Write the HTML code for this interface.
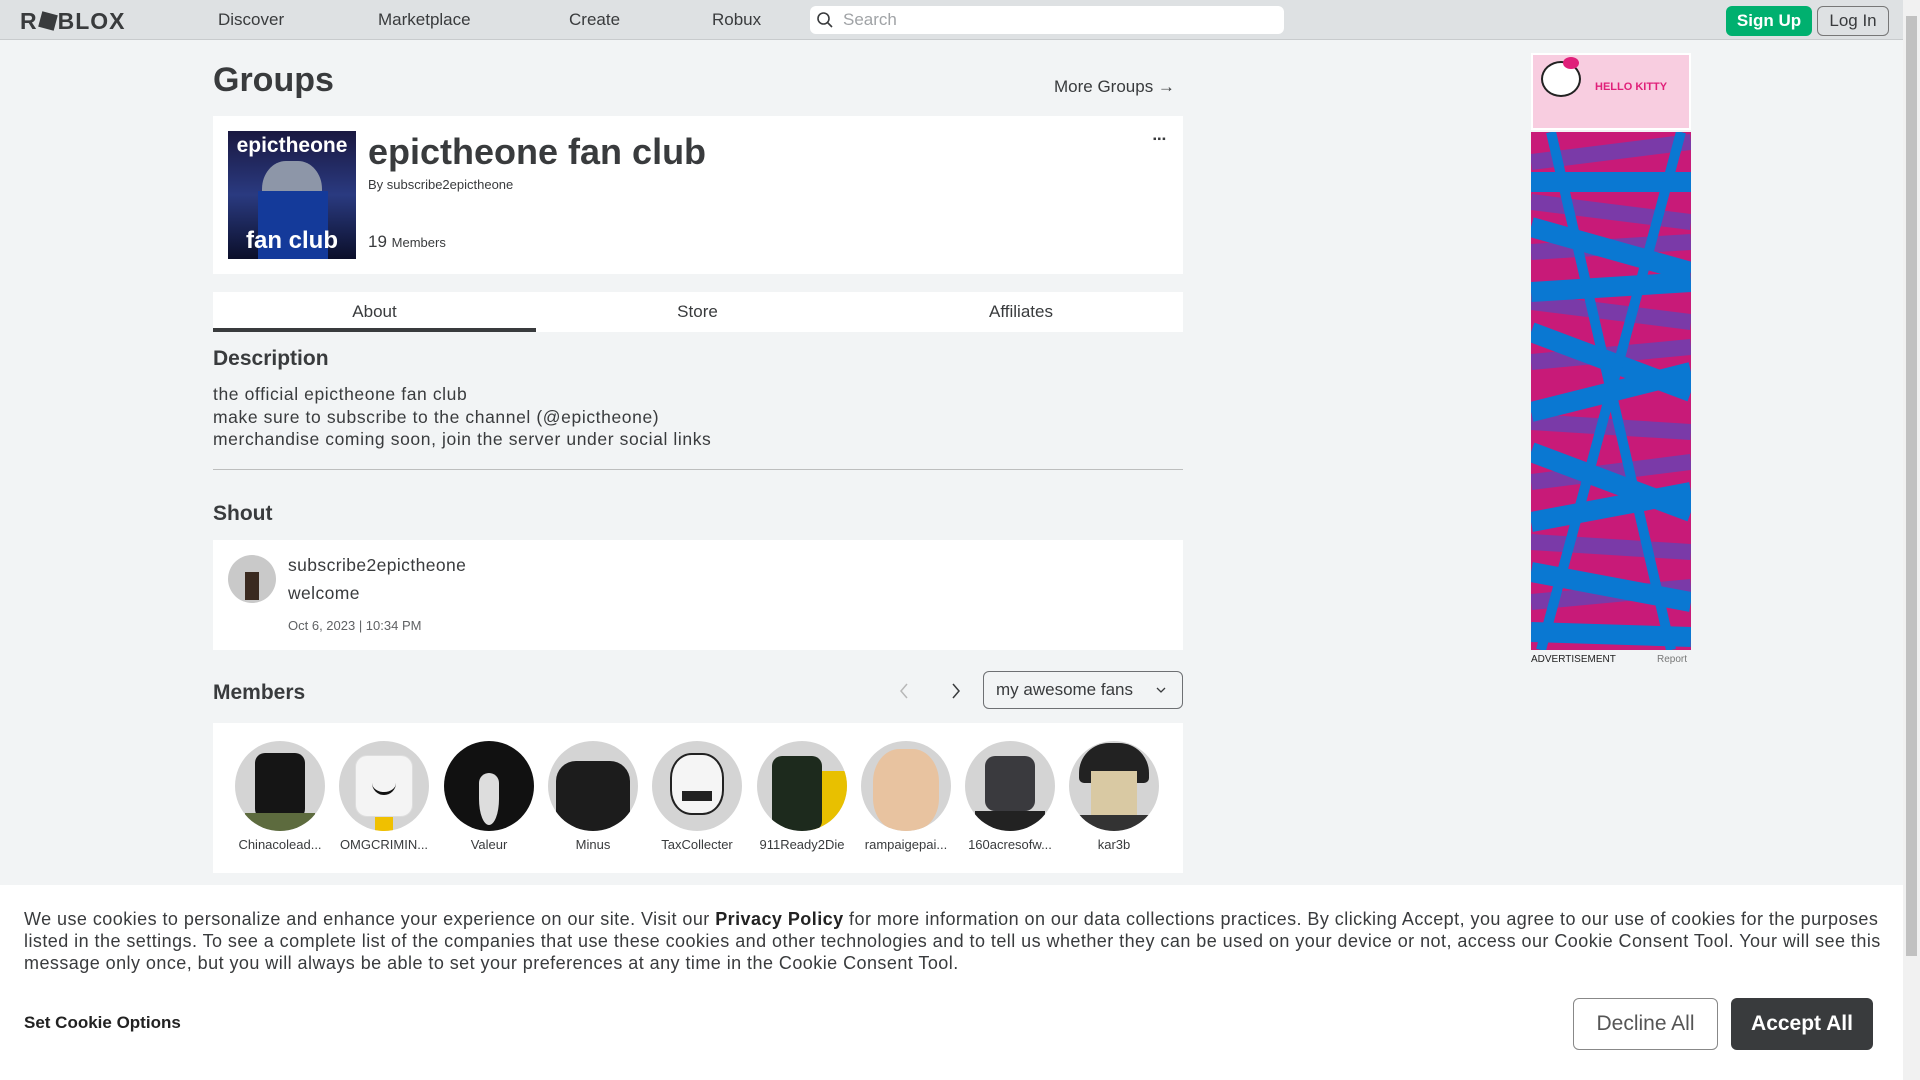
<!DOCTYPE html>
<html><head><meta charset="utf-8"><style>
*{box-sizing:border-box;margin:0;padding:0}
body{width:1920px;height:1080px;overflow:hidden;background:#f2f4f5;font-family:"Liberation Sans",sans-serif;color:#393b3d;position:relative}
.abs{position:absolute}
.nav{left:0;top:0;width:1903px;height:40px;background:#dee1e3;border-bottom:1px solid #c8cbcd}
.nav .l{position:absolute;top:10px;font-size:17px;color:#393b3d}
.card{background:#fff}
.av{position:absolute;width:90px;height:90px;border-radius:50%;background:#d4d4d4;overflow:hidden}
.mn{position:absolute;width:104px;text-align:center;font-size:13px;top:837px;color:#393b3d}
.ck{font-size:18px;white-space:nowrap;letter-spacing:.45px;color:#393b3d}
</style></head><body>
<div class="abs nav">
 <div class="abs" style="left:20px;top:8px;font-size:23px;font-weight:bold;letter-spacing:1px;color:#393b3d">R<span style="display:inline-block;width:16px;height:16px;background:#393b3d;transform:rotate(15deg);margin:0 2px"></span>BLOX</div>
 <div class="l" style="left:218px">Discover</div>
 <div class="l" style="left:378px">Marketplace</div>
 <div class="l" style="left:569px">Create</div>
 <div class="l" style="left:712px">Robux</div>
 <div class="abs" style="left:810px;top:6px;width:474px;height:28px;background:#fff;border-radius:6px">
  <svg class="abs" style="left:6px;top:5px" width="18" height="18" viewBox="0 0 18 18"><circle cx="7.5" cy="7.5" r="5.5" fill="none" stroke="#393b3d" stroke-width="1.6"/><line x1="11.5" y1="11.5" x2="16" y2="16" stroke="#393b3d" stroke-width="1.6"/></svg>
  <div class="abs" style="left:33px;top:4px;font-size:17px;color:#a0a3a6">Search</div>
 </div>
 <div class="abs" style="left:1726px;top:6px;width:86px;height:30px;background:#00b06f;border-radius:6px;color:#fff;font-weight:bold;font-size:17px;text-align:center;line-height:30px">Sign Up</div>
 <div class="abs" style="left:1817px;top:6px;width:72px;height:30px;border:1px solid #777;border-radius:6px;font-size:17px;text-align:center;line-height:28px">Log In</div>
</div>
<div class="abs" style="left:1903px;top:0;width:17px;height:1080px;background:#f1f1f1"><div style="position:absolute;left:3px;top:16px;width:11px;height:940px;background:#c1c1c1"></div></div>

<div class="abs" style="left:213px;top:61px;font-size:34px;font-weight:bold">Groups</div>
<div class="abs" style="left:1054px;top:77px;font-size:17px">More Groups &#8594;</div>

<div class="abs card" style="left:213px;top:116px;width:970px;height:158px">
 <div class="abs" style="left:15px;top:15px;width:128px;height:128px;background:linear-gradient(180deg,#1a1840,#2a3a80 50%,#0b0f2a);overflow:hidden">
  <div class="abs" style="left:34px;top:30px;width:60px;height:70px;border-radius:40% 40% 20% 20%;background:#8d96a8"></div>
  <div class="abs" style="left:30px;top:60px;width:70px;height:68px;background:#143a9a"></div>
  <div class="abs" style="left:0;top:3px;width:128px;text-align:center;color:#fff;font-size:21px;font-weight:bold">epictheone</div>
  <div class="abs" style="left:0;top:96px;width:128px;text-align:center;color:#fff;font-size:24px;font-weight:bold">fan club</div>
 </div>
 <div class="abs" style="left:155px;top:15px;font-size:36px;font-weight:bold;color:#393b3d">epictheone fan club</div>
 <div class="abs" style="left:155px;top:61px;font-size:13px">By subscribe2epictheone</div>
 <div class="abs" style="left:155px;top:116px;font-size:17px">19 <span style="font-size:13px">Members</span></div>
 <div class="abs" style="left:940px;top:18px;font-size:10px;letter-spacing:1px">&#9642;&#9642;&#9642;</div>
</div>

<div class="abs card" style="left:213px;top:292px;width:970px;height:40px">
 <div class="abs" style="left:0;top:10px;width:323px;text-align:center;font-size:17px">About</div>
 <div class="abs" style="left:323px;top:10px;width:323px;text-align:center;font-size:17px">Store</div>
 <div class="abs" style="left:646px;top:10px;width:324px;text-align:center;font-size:17px">Affiliates</div>
 <div class="abs" style="left:0;top:36px;width:323px;height:4px;background:#393b3d"></div>
</div>

<div class="abs" style="left:213px;top:347px;font-size:21px;font-weight:bold">Description</div>
<div class="abs" style="left:213px;top:383px;font-size:17.5px;letter-spacing:.6px;line-height:22.5px">the official epictheone fan club<br>make sure to subscribe to the channel (@epictheone)<br>merchandise coming soon, join the server under social links</div>
<div class="abs" style="left:213px;top:469px;width:970px;height:1px;background:#bdbebe"></div>
<div class="abs" style="left:213px;top:502px;font-size:21px;font-weight:bold">Shout</div>

<div class="abs card" style="left:213px;top:540px;width:970px;height:110px">
 <div class="abs" style="left:15px;top:15px;width:48px;height:48px;border-radius:50%;background:#c9c9c9;overflow:hidden"><div class="abs" style="left:17px;top:17px;width:14px;height:28px;background:#3a2a20"></div></div>
 <div class="abs" style="left:75px;top:15px;font-size:17.5px;letter-spacing:.4px">subscribe2epictheone</div>
 <div class="abs" style="left:75px;top:43px;font-size:17.5px;letter-spacing:.4px">welcome</div>
 <div class="abs" style="left:75px;top:78px;font-size:13px;color:#606264">Oct 6, 2023 | 10:34 PM</div>
</div>

<div class="abs" style="left:213px;top:681px;font-size:21px;font-weight:bold">Members</div>
<svg class="abs" style="left:898px;top:682px" width="12" height="18"><path d="M9 2 L3 9 L9 16" fill="none" stroke="#b8b8b8" stroke-width="1.5"/></svg>
<svg class="abs" style="left:950px;top:682px" width="12" height="18"><path d="M3 2 L9 9 L3 16" fill="none" stroke="#393b3d" stroke-width="1.5"/></svg>
<div class="abs" style="left:983px;top:671px;width:200px;height:38px;border:1px solid #6e7073;border-radius:6px;font-size:17px;line-height:36px;padding-left:12px">my awesome fans<svg class="abs" style="left:172px;top:14px" width="10" height="8"><path d="M1 2 L5 6 L9 2" fill="none" stroke="#393b3d" stroke-width="1.3"/></svg></div>

<div class="abs card" style="left:213px;top:723px;width:970px;height:150px"></div>
<div class="av" style="left:235px;top:741px"><div class="abs" style="left:20px;top:12px;width:50px;height:66px;background:#151515;border-radius:10px"></div><div class="abs" style="left:10px;top:72px;width:70px;height:20px;background:#5d6b3e"></div></div>
<div class="av" style="left:339px;top:741px"><div class="abs" style="left:16px;top:14px;width:58px;height:62px;background:#f4f4f4;border-radius:12px;border:1px solid #ddd"></div><div class="abs" style="left:33px;top:40px;width:24px;height:14px;border-bottom:3px solid #111;border-radius:0 0 14px 14px"></div><div class="abs" style="left:36px;top:76px;width:18px;height:14px;background:#f0c000"></div></div>
<div class="av" style="left:444px;top:741px;background:#111"><div class="abs" style="left:35px;top:32px;width:20px;height:52px;background:#ddd;border-radius:10px 10px 50% 50%"></div></div>
<div class="av" style="left:548px;top:741px"><div class="abs" style="left:8px;top:20px;width:74px;height:70px;background:#1c1c1c;border-radius:20px 20px 6px 6px"></div></div>
<div class="av" style="left:652px;top:741px"><div class="abs" style="left:18px;top:12px;width:54px;height:62px;background:#f5f5f5;border-radius:40%;border:2px solid #222"></div><div class="abs" style="left:30px;top:50px;width:30px;height:10px;background:#222"></div></div>
<div class="av" style="left:757px;top:741px"><div class="abs" style="left:55px;top:30px;width:40px;height:60px;background:#e8c000"></div><div class="abs" style="left:15px;top:15px;width:50px;height:75px;background:#1d2a1d;border-radius:10px"></div></div>
<div class="av" style="left:861px;top:741px"><div class="abs" style="left:12px;top:8px;width:66px;height:82px;background:#e8c3a0;border-radius:40%"></div></div>
<div class="av" style="left:965px;top:741px"><div class="abs" style="left:20px;top:15px;width:50px;height:55px;background:#3a3a3e;border-radius:10px"></div><div class="abs" style="left:10px;top:70px;width:70px;height:20px;background:#222"></div></div>
<div class="av" style="left:1069px;top:741px"><div class="abs" style="left:10px;top:2px;width:70px;height:40px;background:#222;border-radius:30px 30px 5px 5px"></div><div class="abs" style="left:22px;top:30px;width:46px;height:44px;background:#d9c9a3"></div><div class="abs" style="left:10px;top:74px;width:70px;height:16px;background:#333"></div></div>
<div class="mn" style="left:228px">Chinacolead...</div>
<div class="mn" style="left:332px">OMGCRIMIN...</div>
<div class="mn" style="left:437px">Valeur</div>
<div class="mn" style="left:541px">Minus</div>
<div class="mn" style="left:645px">TaxCollecter</div>
<div class="mn" style="left:750px">911Ready2Die</div>
<div class="mn" style="left:854px">rampaigepai...</div>
<div class="mn" style="left:958px">160acresofw...</div>
<div class="mn" style="left:1062px">kar3b</div>

<div class="abs" style="left:1531px;top:53px;width:160px;height:77px;background:#f8cde0;border:2px solid #fff">
 <div class="abs" style="left:8px;top:6px;width:40px;height:36px;background:#fff;border-radius:50%;border:2px solid #222"></div>
 <div class="abs" style="left:30px;top:2px;width:16px;height:12px;background:#e0207a;border-radius:50%"></div>
 <div class="abs" style="left:62px;top:26px;font-size:11px;font-weight:bold;color:#e0207a">HELLO KITTY</div>
</div>
<svg class="abs" style="left:1531px;top:132px" width="160" height="518" viewBox="0 0 160 518">
 <rect width="160" height="518" fill="#c81a78"/>
 <g stroke-width="16" fill="none">
  <path d="M0 30 L160 10 M0 70 L160 90 M0 120 L160 110 M0 170 L160 190 M0 230 L160 215 M0 290 L160 300 M0 350 L160 330 M0 410 L160 420 M0 470 L160 455" stroke="#7a3aa8"/>
  <path d="M0 50 L160 50 M0 95 L160 140 M0 160 L160 150 M0 200 L160 260 M0 280 L160 240 M0 320 L160 380 M0 390 L160 360 M0 440 L160 470 M0 500 L160 505" stroke="#0a78d2" stroke-width="20"/>
  <path d="M20 0 L140 518 M150 0 L10 518" stroke="#0a78d2" stroke-width="10"/>
 </g>
</svg>
<div class="abs" style="left:1531px;top:654px;font-size:10px;color:#222">ADVERTISEMENT</div>
<div class="abs" style="left:1657px;top:654px;font-size:10px;color:#777">Report</div>

<div class="abs" style="left:0;top:885px;width:1903px;height:195px;background:#fff">
 <div class="abs ck" style="left:24px;top:24px">We use cookies to personalize and enhance your experience on our site. Visit our <b style="color:#222">Privacy Policy</b> for more information on our data collections practices. By clicking Accept, you agree to our use of cookies for the purposes</div>
 <div class="abs ck" style="left:24px;top:46px">listed in the settings. To see a complete list of the companies that use these cookies and other technologies and to tell us whether they can be used on your device or not, access our Cookie Consent Tool. Your will see this</div>
 <div class="abs ck" style="left:24px;top:68px">message only once, but you will always be able to set your preferences at any time in the Cookie Consent Tool.</div>
 <div class="abs" style="left:24px;top:128px;font-size:17px;font-weight:bold;color:#222">Set Cookie Options</div>
 <div class="abs" style="left:1573px;top:113px;width:145px;height:52px;border:1px solid #888;border-radius:6px;font-size:21px;text-align:center;line-height:50px;color:#555">Decline All</div>
 <div class="abs" style="left:1731px;top:113px;width:142px;height:52px;background:#393b3d;border-radius:6px;font-size:21px;text-align:center;line-height:52px;color:#fff;font-weight:bold">Accept All</div>
</div>
</body></html>
